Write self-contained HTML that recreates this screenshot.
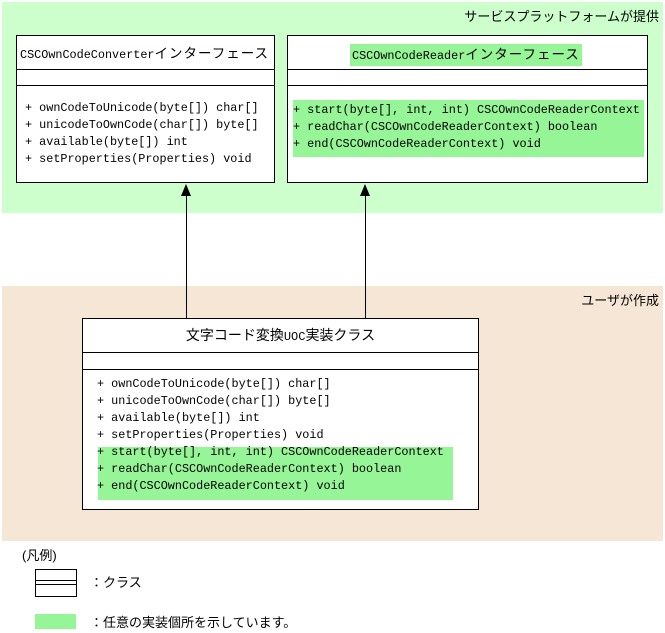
<!DOCTYPE html>
<html><head><meta charset="utf-8"><style>
body{margin:0;width:665px;height:633px;background:#fff;position:relative;overflow:hidden;font-family:"Liberation Mono","Noto Sans CJK JP",monospace;font-size:11.8px;color:#000}
div{position:absolute;box-sizing:border-box}
.t{white-space:pre;line-height:17px}
.box{border:1px solid #000;background:#fff}
.hl{border-top:1px solid #000;border-bottom:1px solid #000;left:0;right:0;height:18px}
.g{background:#96f596}
.j{font-family:"Liberation Sans","Noto Sans CJK JP",sans-serif;font-size:13px;white-space:pre}
.k{font-family:"Noto Sans CJK JP",sans-serif;font-size:13.5px;letter-spacing:1px}
</style></head><body>
<div style="left:2px;top:2px;width:661px;height:211px;background:#ccffcc"></div>
<div class="j" style="right:6px;top:6px">サービスプラットフォームが提供</div>
<div style="left:2px;top:286px;width:661px;height:255px;background:#f6e6d6"></div>
<div class="j" style="right:6px;top:290px">ユーザが作成</div>

<div class="box" style="left:16px;top:35px;width:259px;height:148px">
 <div class="hl" style="top:33px;height:17px"></div>
 <div class="t" style="left:3px;top:8px">CSCOwnCodeConverter<span class="k">インターフェース</span></div>
 <div class="t" style="left:8px;top:64px">+ ownCodeToUnicode(byte[]) char[]
+ unicodeToOwnCode(char[]) byte[]
+ available(byte[]) int
+ setProperties(Properties) void</div>
</div>
<div class="box" style="left:287px;top:35px;width:361px;height:148px">
 <div class="hl" style="top:33px;height:17px"></div>
 <div class="t g" style="left:62px;top:8px;padding:1px 2px">CSCOwnCodeReader<span class="k">インターフェース</span></div>
 <div class="t g" style="left:5px;top:64px;width:351px;height:57px;padding-top:2px">+ start(byte[], int, int) CSCOwnCodeReaderContext
+ readChar(CSCOwnCodeReaderContext) boolean
+ end(CSCOwnCodeReaderContext) void</div>
</div>

<div style="left:186px;top:195px;width:1px;height:123px;background:#000"></div>
<div style="left:181px;top:184px;width:0;height:0;border-left:5px solid transparent;border-right:5px solid transparent;border-bottom:12px solid #000"></div>
<div style="left:365px;top:195px;width:1px;height:123px;background:#000"></div>
<div style="left:360px;top:184px;width:0;height:0;border-left:5px solid transparent;border-right:5px solid transparent;border-bottom:12px solid #000"></div>

<div class="box" style="left:82px;top:318px;width:397px;height:192px">
 <div class="hl" style="top:33px;height:18px"></div>
 <div class="t" style="left:0;right:0;top:8px;text-align:center;font-family:'Noto Sans CJK JP',sans-serif;font-size:14px">文字コード変換<span style="font-family:'Liberation Mono',monospace;font-size:12px">UOC</span>実装クラス</div>
 <div class="g" style="left:15px;top:128px;width:355px;height:53px"></div>
 <div class="t" style="left:14px;top:57px">+ ownCodeToUnicode(byte[]) char[]
+ unicodeToOwnCode(char[]) byte[]
+ available(byte[]) int
+ setProperties(Properties) void
+ start(byte[], int, int) CSCOwnCodeReaderContext
+ readChar(CSCOwnCodeReaderContext) boolean
+ end(CSCOwnCodeReaderContext) void</div>
</div>

<div class="j" style="left:22px;top:545px">(凡例)</div>
<div style="left:35px;top:569px;width:42px;height:28px;border:1px solid #000"></div>
<div style="left:35px;top:580px;width:42px;height:5px;border-top:1px solid #000;border-bottom:1px solid #000"></div>
<div class="j" style="left:90px;top:572px">：クラス</div>
<div class="g" style="left:35px;top:614px;width:41px;height:15px"></div>
<div class="j" style="left:90px;top:612px">：任意の実装個所を示しています。</div>
</body></html>
